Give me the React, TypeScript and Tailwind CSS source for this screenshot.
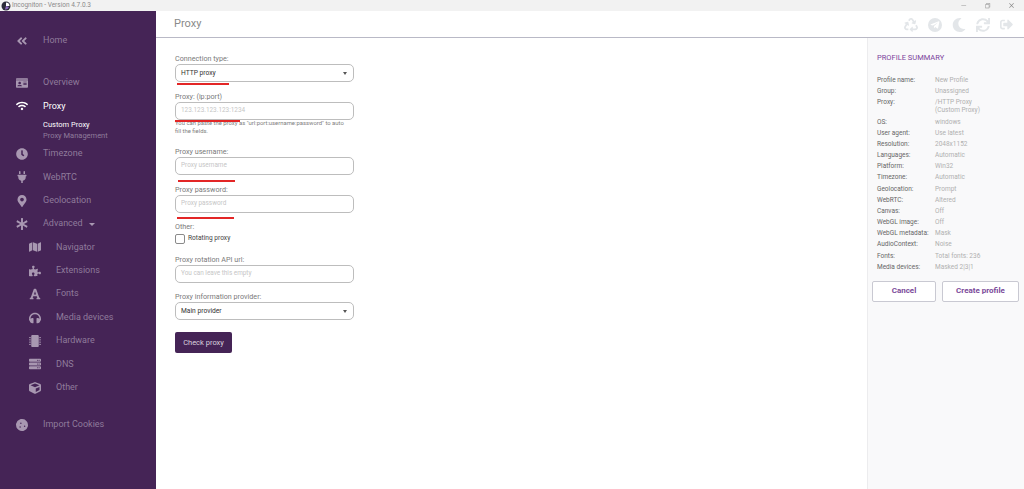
import { ReactNode } from 'react';
import { IconType } from 'react-icons';
import {
  FaAngleDoubleLeft,
  FaAsterisk,
  FaClock,
  FaCookie,
  FaCube,
  FaFont,
  FaHeadphones,
  FaIdCard,
  FaMap,
  FaMapMarkerAlt,
  FaMicrochip,
  FaMoon,
  FaPlug,
  FaPuzzlePiece,
  FaRecycle,
  FaServer,
  FaSignOutAlt,
  FaSync,
  FaTelegramPlane,
  FaWifi,
} from 'react-icons/fa';
import { VscChromeClose, VscChromeMinimize, VscChromeRestore } from 'react-icons/vsc';

const advancedItems: [IconType, string][] = [
  [FaMap, 'Navigator'],
  [FaPuzzlePiece, 'Extensions'],
  [FaFont, 'Fonts'],
  [FaHeadphones, 'Media devices'],
  [FaMicrochip, 'Hardware'],
  [FaServer, 'DNS'],
  [FaCube, 'Other'],
];

const summary: [string, string][] = [
  ['Profile name:', 'New Profile'],
  ['Group:', 'Unassigned'],
  ['Proxy:', '/HTTP Proxy\n(Custom Proxy)'],
  ['OS:', 'windows'],
  ['User agent:', 'Use latest'],
  ['Resolution:', '2048x1152'],
  ['Languages:', 'Automatic'],
  ['Platform:', 'Win32'],
  ['Timezone:', 'Automatic'],
  ['Geolocation:', 'Prompt'],
  ['WebRTC:', 'Altered'],
  ['Canvas:', 'Off'],
  ['WebGL image:', 'Off'],
  ['WebGL metadata:', 'Mask'],
  ['AudioContext:', 'Noise'],
  ['Fonts:', 'Total fonts: 236'],
  ['Media devices:', 'Masked 2|3|1'],
];

const NavItem = ({ icon: Icon, label, active }: { icon: IconType; label: string; active?: boolean }) => (
  <div className={`flex h-[23.4px] items-center text-[9px] ${active ? 'text-white' : 'text-[#8f7b9b]'}`}>
    <span className={`flex w-[43px] justify-center ${active ? 'text-white' : 'text-[#a897b1]'}`}>
      <Icon size={12} />
    </span>
    <span>{label}</span>
  </div>
);

const SubNavItem = ({ icon: Icon, label }: { icon: IconType; label: string }) => (
  <div className="flex h-[23.4px] items-center text-[9px] text-[#8f7b9b]">
    <span className="flex w-[56px] justify-center pl-[13px] text-[#a897b1]">
      <Icon size={12} />
    </span>
    <span>{label}</span>
  </div>
);

const Sidebar = () => (
  <aside className="flex w-[156px] shrink-0 flex-col bg-[#452456] pt-[18px]">
    <NavItem icon={FaAngleDoubleLeft} label="Home" />
    <div className="h-[19px]" />
    <NavItem icon={FaIdCard} label="Overview" />
    <NavItem icon={FaWifi} label="Proxy" active />
    <div className="flex h-[24px] flex-col justify-center pl-[43px] text-[7.5px] leading-[11px]">
      <span className="text-white">Custom Proxy</span>
      <span className="text-[#8f7b9b]">Proxy Management</span>
    </div>
    <NavItem icon={FaClock} label="Timezone" />
    <NavItem icon={FaPlug} label="WebRTC" />
    <NavItem icon={FaMapMarkerAlt} label="Geolocation" />
    <div className="flex h-[23.4px] items-center text-[9px] text-[#8f7b9b]">
      <span className="flex w-[43px] justify-center text-[#a897b1]">
        <FaAsterisk size={12} />
      </span>
      <span>Advanced</span>
      <span className="ml-[6px] h-0 w-0 border-x-[3px] border-t-[3px] border-x-transparent border-t-[#a897b1]" />
    </div>
    {advancedItems.map(([icon, label]) => (
      <SubNavItem key={label} icon={icon} label={label} />
    ))}
    <div className="h-[13.5px]" />
    <NavItem icon={FaCookie} label="Import Cookies" />
  </aside>
);

const Field = ({ label, gap, children }: { label: string; gap: string; children: ReactNode }) => (
  <div className={`relative w-[179px] ${gap}`}>
    <div className="h-[9px] text-[7.2px] leading-[9px] text-[#7a7a7a]">{label}</div>
    {children}
  </div>
);

const Box = ({ children }: { children: ReactNode }) => (
  <div className="mt-[1px] flex h-[18px] w-[179px] items-center justify-between rounded-[5px] border border-[#bdbdbd] pl-[5px] pr-[6px]">
    {children}
  </div>
);

const SelectBox = ({ value }: { value: string }) => (
  <Box>
    <span className="text-[6.7px] text-[#333333]">{value}</span>
    <span className="h-0 w-0 border-x-[2.5px] border-t-[3px] border-x-transparent border-t-[#555555]" />
  </Box>
);

const InputBox = ({ placeholder }: { placeholder: string }) => (
  <Box>
    <span className="text-[6.4px] text-[#c6c6c6]">{placeholder}</span>
  </Box>
);

const RedLine = ({ className }: { className: string }) => (
  <div className={`absolute h-[2px] bg-[#e32626] ${className}`} />
);

const ProxyForm = () => (
  <main className="flex-1 pl-[19px] pt-[16px]">
    <Field label="Connection type:" gap="">
      <SelectBox value="HTTP proxy" />
      <RedLine className="left-[2px] top-[29px] w-[52px]" />
    </Field>
    <Field label="Proxy: (ip:port)" gap="mt-[10px]">
      <InputBox placeholder="123.123.123.123:1234" />
      <RedLine className="left-0 top-[28px] w-[65px]" />
      <p className="-mt-[1px] w-[172px] text-[5.9px] leading-[8px] text-[#808080]">
        You can paste the proxy as "url:port:username:password" to auto fill the fields.
      </p>
    </Field>
    <Field label="Proxy username:" gap="mt-[12px]">
      <InputBox placeholder="Proxy username" />
      <RedLine className="left-[3px] top-[33px] w-[57px]" />
    </Field>
    <Field label="Proxy password:" gap="mt-[10px]">
      <InputBox placeholder="Proxy password" />
      <RedLine className="left-[2px] top-[32px] w-[57px]" />
    </Field>
    <Field label="Other:" gap="mt-[9px]">
      <label className="mt-[3px] flex items-center gap-[3px] text-[6.6px] text-[#444444]">
        <span className="h-[10px] w-[10px] rounded-[2px] border-[1.5px] border-[#8a8a8a]" />
        Rotating proxy
      </label>
    </Field>
    <Field label="Proxy rotation API url:" gap="mt-[11px]">
      <InputBox placeholder="You can leave this empty" />
    </Field>
    <Field label="Proxy information provider:" gap="mt-[9px]">
      <SelectBox value="Main provider" />
    </Field>
    <button className="mt-[12px] flex h-[21px] w-[57px] items-center justify-center rounded-[2px] bg-[#452456] text-[7.5px] text-[#d8cfdd]">
      Check proxy
    </button>
  </main>
);

const SummaryPanel = () => (
  <aside className="flex w-[157px] shrink-0 flex-col border-l border-[#ececee] bg-[#f9f9fa] pl-[9px] pt-[15px]">
    <h2 className="text-[7.5px] leading-[9px] text-[#7b3f9b]">PROFILE SUMMARY</h2>
    <dl className="mt-[14px] flex flex-col gap-[3px] text-[6.5px] leading-[8.15px]">
      {summary.map(([name, value]) => (
        <div key={name} className="flex">
          <dt className="w-[58px] shrink-0 text-[#666666]">{name}</dt>
          <dd className="whitespace-pre-line text-[#b0b0b0]">{value}</dd>
        </div>
      ))}
    </dl>
    <div className="-ml-[5px] mt-[10px] flex gap-[6px] pr-[5px]">
      <button className="h-[21px] w-[64px] rounded-[2px] border border-[#c9c9d2] bg-white text-[8px] font-bold text-[#7b4a9a]">
        Cancel
      </button>
      <button className="h-[21px] w-[77px] rounded-[2px] border border-[#c9c9d2] bg-white text-[8px] font-bold text-[#7b4a9a]">
        Create profile
      </button>
    </div>
  </aside>
);

const AppLogo = () => (
  <svg width="10" height="10" viewBox="0 0 10 10">
    <circle cx="5" cy="5" r="4.5" fill="#2b2b3a" />
    <path d="M5 1.5 A3.5 3.5 0 0 1 8.5 5 L5 5 Z" fill="#ffffff" />
    <path d="M5 5 L8 6 A3.5 3.5 0 0 1 4 8.4 Z" fill="#8e6cc0" />
  </svg>
);

export default function App() {
  return (
    <div className="flex h-[489px] w-[1024px] flex-col overflow-hidden bg-white font-['Roboto',sans-serif]">
      <div className="flex h-[11px] shrink-0 items-center justify-between bg-[#f2f2f2] pl-[1px]">
        <div className="flex items-center gap-[1px]">
          <AppLogo />
          <span className="text-[6.5px] text-[#8a8a8a]">Incogniton - Version 4.7.0.3</span>
        </div>
        <div className="flex items-center gap-[17px] pr-[9px] text-[#888888]">
          <VscChromeMinimize size={7} />
          <VscChromeRestore size={7} />
          <VscChromeClose size={7} />
        </div>
      </div>
      <div className="flex min-h-0 flex-1">
        <Sidebar />
        <div className="flex min-w-0 flex-1 flex-col">
          <header className="flex h-[27px] shrink-0 items-center justify-between border-b border-[#b9b9c6] pl-[18px] pr-[11px] pt-[1px]">
            <span className="text-[11px] text-[#8a8a8a]">Proxy</span>
            <div className="flex items-center gap-[10px] text-[#e3e6e9]">
              <FaRecycle size={14} />
              <span className="flex h-[14px] w-[14px] items-center justify-center rounded-full bg-[#e3e6e9] text-white">
                <FaTelegramPlane size={10} />
              </span>
              <FaMoon size={14} />
              <FaSync size={14} />
              <FaSignOutAlt size={13} />
            </div>
          </header>
          <div className="flex min-h-0 flex-1">
            <ProxyForm />
            <SummaryPanel />
          </div>
        </div>
      </div>
    </div>
  );
}
